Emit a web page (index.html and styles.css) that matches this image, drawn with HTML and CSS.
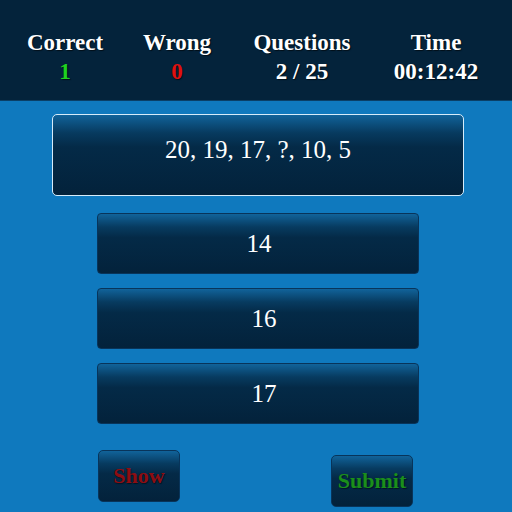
FILE: index.html
```html
<!DOCTYPE html>
<html>
<head>
<meta charset="utf-8">
<link rel="stylesheet" href="styles.css">
</head>
<body>
<header class="stats">
  <div class="stat"><div class="label">Correct</div><div class="value good">1</div></div>
  <div class="stat"><div class="label">Wrong</div><div class="value bad">0</div></div>
  <div class="stat"><div class="label">Questions</div><div class="value">2 / 25</div></div>
  <div class="stat"><div class="label">Time</div><div class="value">00:12:42</div></div>
</header>
<main class="quiz">
  <div class="question">20, 19, 17, ?, 10, 5</div>
  <div class="answers">
    <div class="answer">14</div>
    <div class="answer shifted">16</div>
    <div class="answer shifted">17</div>
  </div>
  <div class="actions">
    <div class="btn show">Show</div>
    <div class="btn submit">Submit</div>
  </div>
</main>
</body>
</html>
```
FILE: styles.css
```css
html, body {
  margin: 0;
  padding: 0;
}
body {
  width: 512px;
  height: 512px;
  overflow: hidden;
  background: #0f79be;
  font-family: "Liberation Serif", "Times New Roman", serif;
  color: #ffffff;
}
.stats {
  height: 101px;
  box-sizing: border-box;
  background: #04233b;
  border-bottom: 1px solid #0a3f66;
  display: grid;
  grid-template-columns: 114px 110px 140px 128px;
  padding: 30px 0 0 8px;
}
.stat {
  text-align: center;
  font-weight: bold;
  font-size: 23px;
  text-shadow: 1px 1px 1px rgba(0,0,0,0.6);
}
.label {
  line-height: 26px;
}
.value {
  line-height: 32px;
}
.good { color: #1fd21f; }
.bad { color: #e01010; }
.quiz {
  padding-top: 13px;
}
.question {
  margin-left: 52px;
  width: 412px;
  height: 82px;
  box-sizing: border-box;
  border: 1px solid #d6ecfa;
  border-radius: 5px;
  background: linear-gradient(to bottom, #11639a 0%, #073b60 22%, #042a47 40%, #03223b 100%);
  text-align: center;
  font-size: 25px;
  line-height: 28px;
  padding-top: 21px;
}
.answers {
  margin-top: 17px;
  display: flex;
  flex-direction: column;
  gap: 14px;
}
.answer {
  margin-left: 97px;
  width: 322px;
  height: 61px;
  box-sizing: border-box;
  border: 1px solid #08345a;
  border-radius: 4px;
  background: linear-gradient(to bottom, #11639a 0%, #073b60 22%, #042a47 40%, #03223b 100%);
  text-align: center;
  font-size: 25px;
  line-height: 59px;
  padding-left: 2px;
}
.answer.shifted {
  padding-left: 12px;
}
.actions {
  position: relative;
  height: 80px;
  margin-top: 26px;
}
.btn {
  position: absolute;
  width: 82px;
  height: 52px;
  box-sizing: border-box;
  border: 1px solid #08345a;
  border-radius: 5px;
  background: linear-gradient(to bottom, #11639a 0%, #073b60 25%, #042a47 45%, #03223b 100%);
  text-align: center;
  font-weight: bold;
  font-size: 22px;
  line-height: 50px;
  text-shadow: 1px 1px 1px rgba(0,0,0,0.5);
}
.show {
  left: 98px;
  top: 0;
  color: #8e0d12;
}
.submit {
  left: 331px;
  top: 5px;
  color: #1b8f1b;
}
```
